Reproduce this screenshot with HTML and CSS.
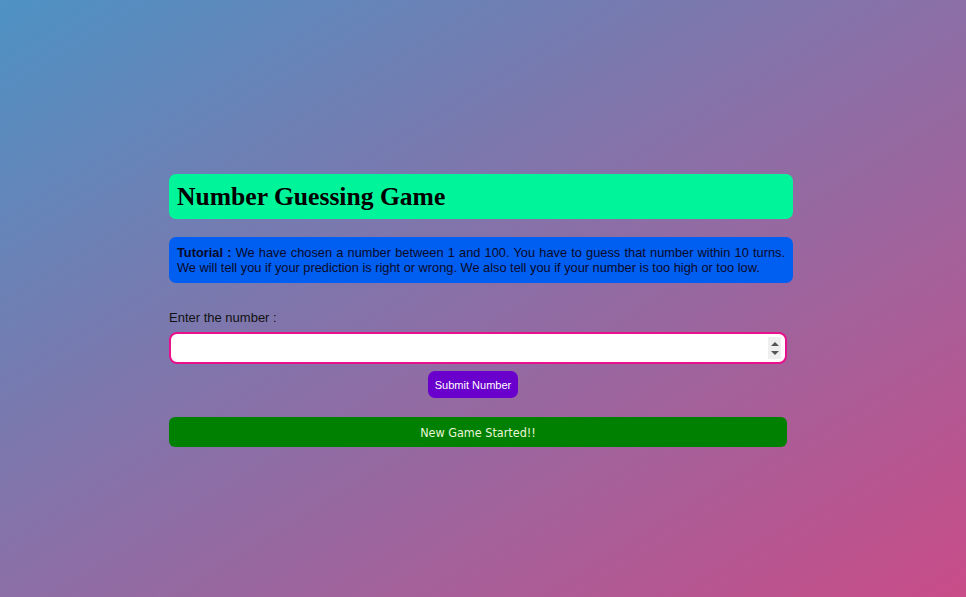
FILE: index.html
```html
<!DOCTYPE html>
<html>
<head>
<meta charset="utf-8">
<link rel="stylesheet" href="styles.css">
</head>
<body>
<main class="game">
  <h1 class="title">Number Guessing Game</h1>
  <p class="tutorial"><b>Tutorial :</b> We have chosen a number between 1 and 100. You have to guess that number within 10 turns. We will tell you if your prediction is right or wrong. We also tell you if your number is too high or too low.</p>
  <label class="label" for="guess">Enter the number :</label>
  <div class="field-wrap">
    <input class="field" id="guess" type="number">
    <span class="spin"><i class="up"></i><i class="down"></i></span>
  </div>
  <div class="actions"><button class="submit">Submit Number</button></div>
  <div class="status">New Game Started!!</div>
</main>
</body>
</html>
```
FILE: styles.css
```css
html, body { height: 100%; }
body {
  margin: 0;
  background: linear-gradient(to bottom right, #4e92c4, #c84c88);
  display: flex;
  justify-content: center;
  padding-right: 4px;
  box-sizing: border-box;
  font-family: "Liberation Sans", Arial, sans-serif;
}
.game {
  width: 624px;
  padding-top: 174px;
  display: flex;
  flex-direction: column;
}
.title {
  margin: 0;
  background: #00f59a;
  border-radius: 7px;
  height: 45px;
  box-sizing: border-box;
  padding: 0 8px;
  display: flex;
  align-items: center;
  font-family: "Liberation Serif", "Times New Roman", serif;
  font-size: 25.6px;
  font-weight: bold;
  color: #000;
}
.tutorial {
  margin: 18px 0 0;
  background: #005ef0;
  border-radius: 7px;
  padding: 8px 8px 8px 8px;
  font-size: 12.8px;
  line-height: 15px;
  text-align: justify;
  color: #0a0a2a;
}
.label {
  margin-top: 27px;
  font-size: 13px;
  color: #111;
  line-height: 15px;
}
.field-wrap {
  position: relative;
  margin-top: 7px;
  width: 618px;
}
.field {
  display: block;
  width: 618px;
  height: 32px;
  box-sizing: border-box;
  border: 2px solid #e8108c;
  border-radius: 8px;
  background: #fff;
  outline: none;
  padding: 0 8px;
  font-size: 13px;
}
.field::-webkit-inner-spin-button,
.field::-webkit-outer-spin-button { -webkit-appearance: none; margin: 0; }
.spin {
  position: absolute;
  left: 599px;
  top: 5px;
  width: 13px;
  height: 22px;
  background: #efefef;
}
.spin i {
  position: absolute;
  left: 3px;
  width: 0;
  height: 0;
  border-left: 4px solid transparent;
  border-right: 4px solid transparent;
}
.spin .up { top: 5px; border-bottom: 4px solid #555; }
.spin .down { top: 14px; border-top: 4px solid #555; }
.actions {
  width: 618px;
  box-sizing: border-box;
  padding-right: 10px;
  display: flex;
  justify-content: center;
  margin-top: 7px;
}
.submit {
  background: #6a00cc;
  color: #fff;
  border: none;
  border-radius: 7px;
  height: 27px;
  padding: 0 7px;
  font-family: "Liberation Sans", Arial, sans-serif;
  font-size: 11px;
}
.status {
  margin-top: 19px;
  width: 618px;
  height: 30px;
  background: #008000;
  border-radius: 6px;
  display: flex;
  align-items: center;
  justify-content: center;
  font-family: "DejaVu Sans Condensed", "DejaVu Sans", sans-serif;
  font-stretch: semi-condensed;
  font-size: 12.5px;
  color: #eaf5d8;
}
```
